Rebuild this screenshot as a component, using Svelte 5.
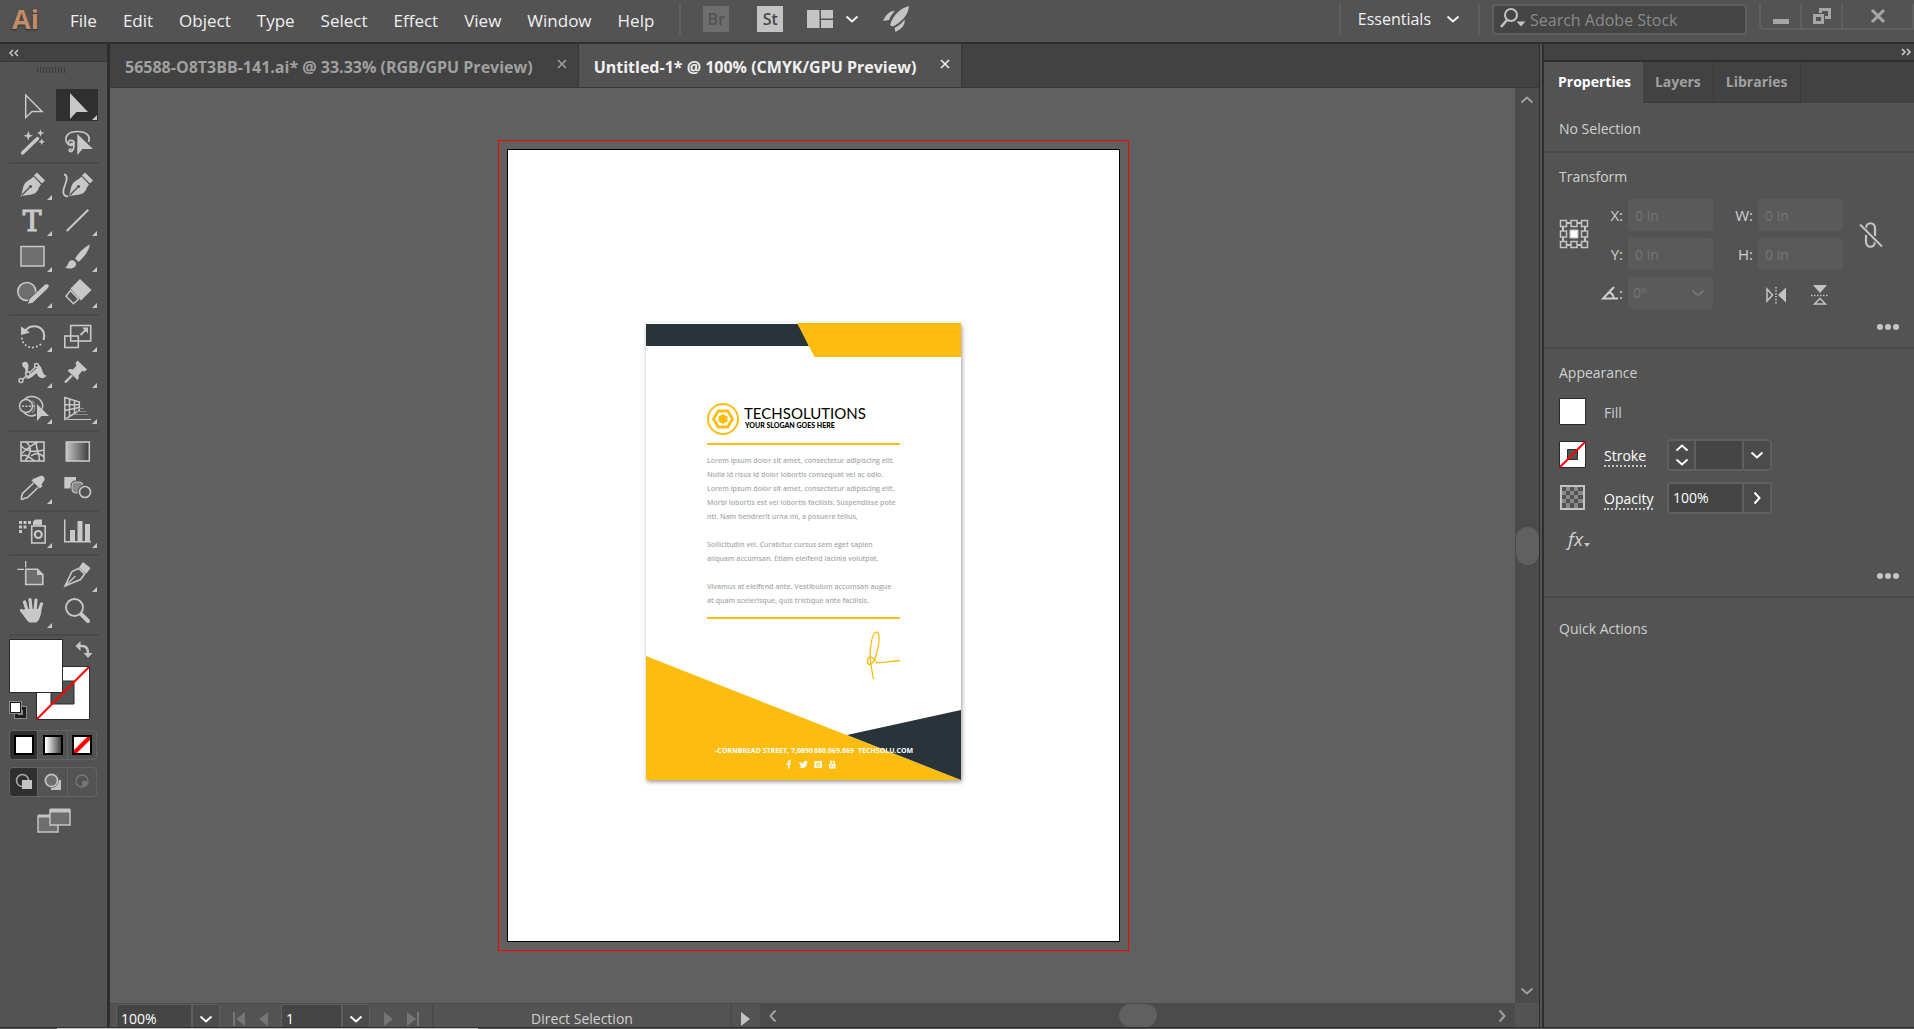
<script>
  const menus = ["File", "Edit", "Object", "Type", "Select", "Effect", "View", "Window", "Help"];

  const documents = [
    { title: "56588-O8T3BB-141.ai* @ 33.33% (RGB/GPU Preview)", active: false },
    { title: "Untitled-1* @ 100% (CMYK/GPU Preview)", active: true },
  ];

  const pen = `
    <path d="M10.500 29.500C13 24 12.500 19 15.500 15.500C18 13 21 12.500 23.500 9.500L31 17.500C28.500 20 28.500 23.500 25.500 26C21.500 28.500 16 27.500 10.500 29.500Z"/>
    <path d="M24 8.500L27 5.500L35 13.500L32 16.500Z"/>
    <path d="M11.500 28.500L19.500 20.500" stroke="#535353" stroke-width="1.500"/>
    <circle cx="20.500" cy="19.500" r="1.600" fill="#535353"/>`;

  // every icon is drawn on a 44 x 36 cell
  const toolGroups = [
    [
      { name: "Selection", art: `<path d="M15.700 8V30.500L22 24.500H32Z" fill="none" stroke="currentColor" stroke-width="1.500"/>` },
      { name: "Direct Selection", more: true, selected: true, art: `<path d="M15 6V32L21.500 25H33Z"/>` },
      {
        name: "Magic Wand",
        art: `<path d="M12.500 30L27.500 15.500" stroke="currentColor" stroke-width="3.400" stroke-linecap="round"/>
          <path d="M18.300 8l1.200 3.500 3.500 1.200-3.500 1.200-1.200 3.500-1.200-3.500-3.500-1.200 3.500-1.200zM30.500 6.500l1 2.600 2.600 1-2.600 1-1 2.600-1-2.600-2.600-1 2.600-1zM31.700 15.500l1 2.300 2.300 1-2.300 1-1 2.300-1-2.300-2.300-1 2.300-1z"/>`,
      },
      {
        name: "Lasso",
        art: `<g fill="none" stroke="currentColor" stroke-width="1.700">
            <path d="M12 20C8.500 13 14 8.500 22.500 8.500C31 8.500 36 12.500 33.500 19"/>
            <path d="M12 20C15 24 20 22 19 19C18 16.500 13 17 13.500 20C14 22 17.500 22 17 19.500M18.500 20C20 24 18 29 15 28.500C13 27.500 15 25.500 16.500 26.500"/>
          </g>
          <path d="M22.300 11V32L27.500 26H38Z"/>`,
      },
    ],
    [
      { name: "Pen", more: true, art: pen },
      {
        name: "Curvature",
        art: `<g transform="translate(3 0)">${pen}</g>
          <path d="M9 7.500C13 8 12 13 10 18C8 23 6.500 29 13 29.500" fill="none" stroke="currentColor" stroke-width="1.800"/>`,
      },
      {
        name: "Type",
        more: true,
        art: `<text x="22" y="28" text-anchor="middle" font-family="'DejaVu Serif', serif" font-size="28" stroke="currentColor" stroke-width="1.200">T</text>`,
      },
      { name: "Line Segment", more: true, art: `<path d="M11.700 28L33.300 6.700" stroke="currentColor" stroke-width="2"/>` },
      { name: "Rectangle", more: true, art: `<rect x="11" y="7.500" width="23" height="19.500" fill="#6e6e6e" stroke="currentColor" stroke-width="1.500"/>` },
      {
        name: "Paintbrush",
        more: true,
        art: `<path d="M35 5.500C31 7 24 13 20 19.500L23.500 23C29 18.500 34.500 10.500 35 5.500Z"/>
          <path d="M10 28.500C13 28 12 24 15.500 21.500C19 20.500 22 23.500 21 26C19 30.500 13.500 30 10 28.500Z"/>`,
      },
      {
        name: "Shaper",
        more: true,
        art: `<circle cx="16.800" cy="16.500" r="9" fill="#6e6e6e" stroke="currentColor" stroke-width="1.600"/>
          <path d="M17.500 29.500L19 24L34.500 9.500C37.500 7.500 40.500 10 38.500 13L23 28Z" stroke="#535353" stroke-width="1"/>`,
      },
      {
        name: "Eraser",
        more: true,
        art: `<path d="M25 4L36.500 15L26 25.500L15.500 13.500Z"/>
          <path d="M15.500 15.500L11 21.300L18.500 28.800L23.500 24Z" fill="none" stroke="currentColor" stroke-width="1.500"/>`,
      },
    ],
    [
      {
        name: "Rotate",
        more: true,
        art: `<path d="M15 12C20 5.500 30 5.500 33.500 13C34.500 16 34.500 18.500 33.500 21" fill="none" stroke="currentColor" stroke-width="2.200"/>
          <path d="M11 7.500V16L20 13.500Z"/>
          <path d="M12 19.500C12.500 25 18 29 23 28.500C27 28 30.500 26 32.500 23.500" fill="none" stroke="currentColor" stroke-width="2" stroke-linecap="round" stroke-dasharray="0.100 3.800"/>`,
      },
      {
        name: "Scale",
        more: true,
        art: `<g fill="none" stroke="currentColor" stroke-width="1.600"><rect x="15.700" y="6.500" width="20" height="15.500"/><rect x="9.800" y="17" width="13.500" height="11.500"/>
          <path d="M25.500 16L31 10.500" stroke-width="2"/></g><path d="M27 8.500H33V14.500Z"/>`,
      },
      {
        name: "Width",
        more: true,
        art: `<path d="M12 8.500C15 5 18.500 7 18.500 11C18.500 14 18 16.500 16 19L14.500 20C16 17 15.500 14 14.500 13C13 12 12 11 12 8.500Z"/>
          <path d="M14 22.500C19 26 23 21 26.500 18C28 23 33 25.500 36.500 20.500C31 20 33 9.500 27.500 9.500L27 13C26 14.500 23 15 21 17C19 19 17 22 14 22.500Z"/>
          <path d="M11.500 25.500L26.500 11" stroke="#535353" stroke-width="3"/>
          <path d="M11.500 25.500L26.500 11" stroke="currentColor" stroke-width="1.500"/>
          <g fill="#535353" stroke="currentColor" stroke-width="1.400"><circle cx="11" cy="25.500" r="2"/><circle cx="18" cy="19" r="2.200"/><circle cx="26.500" cy="10.500" r="2"/></g>`,
      },
      {
        name: "Puppet Warp",
        more: true,
        art: `<path d="M22.500 5.500L32 14.500L29.500 16.500L27 16L23.500 20.500C24 22.500 23.500 24 22.500 25L12.500 15.500C14 14 16 13.500 18 14.500L21.500 10.500L20.500 8Z"/>
          <path d="M10 27.500L17 20.500" stroke="currentColor" stroke-width="2.400"/>`,
      },
      {
        name: "Shape Builder",
        more: true,
        art: `<g fill="none" stroke="currentColor" stroke-width="1.500"><path d="M14.500 8.500C18 4 27 4.500 31 10C33 13 33 16 32 18M14 21.500C17 25 22 26 26 23.500"/><circle cx="16" cy="15" r="6.500"/>
          <path d="M22 9.500C26 13 25.500 19 22 21.500" stroke="#8a8a8a"/><path d="M12 15.300H26" stroke-dasharray="2 1.500"/></g>
          <path d="M27 13V30L31.500 25H39Z"/>`,
      },
      {
        name: "Perspective Grid",
        more: true,
        art: `<g fill="none" stroke="currentColor" stroke-width="1.500"><path d="M9.800 6.500L24.300 11V19.500L9.800 28.500ZM9.800 13.500L24.300 13.800M9.800 19.500L24.300 16.500M14.500 8V25.500M19.500 9.500V22.500"/></g>
          <g stroke="#8a8a8a" stroke-width="1"><path d="M24 17.500H29M22 20.500H31M19 23.500H33"/><path d="M12 28.500H36" stroke="currentColor"/></g>`,
      },
    ],
    [
      {
        name: "Mesh",
        art: `<g fill="none" stroke="currentColor" stroke-width="1.600"><rect x="11" y="7" width="23" height="19"/>
          <path d="M16 7C22 12 22 17 15 26M27 7C24 13 31 18 29 26M11 11C16 16 23 18 34 15M11 21C17 18 20 24 25 26M11 19C17 13 20 12 27 7M21 21C26 17 30 18 34 22"/></g>`,
      },
      { name: "Gradient", art: `<rect x="11.300" y="7" width="23" height="19" fill="url(#tool-gradient)" stroke="currentColor" stroke-width="1.600"/>` },
      {
        name: "Eyedropper",
        more: true,
        art: `<path d="M24.500 7.500L30 5C33 3.500 36 7 34 10L31.500 13.500L32.500 15L30 17.500L21.500 9.500L24 7.200Z"/>
          <path d="M23.500 12L12.500 22.500L11.500 26.500C10.500 28.500 12.500 29 14 27.500L17.500 26.500L28 16.500" fill="none" stroke="currentColor" stroke-width="1.600"/>`,
      },
      {
        name: "Blend",
        art: `<path d="M9.300 6H21V17.500H9.300Z"/><rect x="17" y="11" width="11" height="11" rx="3.500" fill="#8a8a8a" stroke="#535353" stroke-width="3"/>
          <rect x="17" y="11" width="11" height="11" rx="3.500" fill="#8a8a8a" stroke="currentColor" stroke-width="1"/>
          <circle cx="30" cy="21" r="6" fill="#535353" stroke="#535353" stroke-width="3"/><circle cx="30" cy="21" r="5.500" fill="#535353" stroke="currentColor" stroke-width="1.600"/>`,
      },
    ],
    [
      {
        name: "Symbol Sprayer",
        more: true,
        art: `<path d="M9 6h3v3H9zM13.500 6h3v3h-3zM18 6h3v3h-3zM9 10.500h3v3H9zM13.500 10.500h3v3h-3zM9 15h3v3H9zM23 6.500L25.500 4.500H32V10H23Z"/>
          <rect x="21.700" y="11" width="13.500" height="17" fill="none" stroke="currentColor" stroke-width="1.600"/>
          <circle cx="28.300" cy="19.500" r="3.500" fill="none" stroke="currentColor" stroke-width="2.200"/>`,
      },
      { name: "Column Graph", more: true, art: `<path d="M9 4.500h1.500V26H36v1.500H9zM15 15h5v11h-5zM22.500 6h5v20h-5zM30 9h5v17h-5z"/>` },
    ],
    [
      {
        name: "Artboard",
        art: `<path d="M15.700 2V8.500M7.300 10.300H14" stroke="currentColor" stroke-width="1.300"/>
          <path d="M15.700 10.300H27.500L32.800 15.500V25.500H15.700Z" fill="#6e6e6e" stroke="currentColor" stroke-width="1.600"/><path d="M27 10V16H33Z"/>`,
      },
      {
        name: "Slice",
        more: true,
        art: `<path d="M28 3L35.500 9L31 15L24 8.500Z"/><path d="M23.500 9.500L17 12.500L10 27L25.500 20.500L29.500 15Z" fill="none" stroke="currentColor" stroke-width="1.600"/>
          <path d="M10 27L20.500 17" stroke="currentColor" stroke-width="1.200"/>`,
      },
      {
        name: "Hand",
        more: true,
        art: `<g fill="none" stroke="currentColor" stroke-linecap="round" stroke-width="3.200"><path d="M17 15L14.500 7M21 14L20 4.500M25.200 14L26 5M28.500 17L31.500 9M17 22L11.500 15.500"/></g>
          <path d="M15.500 14H30L31.500 12C32 19 29 26.500 26 27.500H19.500C17 26 12 18.500 11 15.500Z"/>`,
      },
      {
        name: "Zoom",
        art: `<circle cx="19.500" cy="12.500" r="8.500" fill="none" stroke="currentColor" stroke-width="1.800"/>
          <path d="M26.500 19.500L33 26" stroke="currentColor" stroke-width="4" stroke-linecap="round"/>`,
      },
    ],
  ];

  const transformFields = [
    { id: "pos-x", label: "X:" },
    { id: "width", label: "W:" },
    { id: "pos-y", label: "Y:" },
    { id: "height", label: "H:" },
  ];

  const panelTabs = ["Properties", "Layers", "Libraries"];

  const letter = [
    { y: 140, text: "Lorem ipsum dolor sit amet, consectetur adipiscing elit." },
    { y: 154, text: "Nulla id risus id dolor lobortis consequat vel ac odio." },
    { y: 168, text: "Lorem ipsum dolor sit amet, consectetur adipiscing elit." },
    { y: 182, text: "Morbi lobortis est vel lobortis facilisis. Suspendisse pote" },
    { y: 196, text: "nti. Nam hendrerit urna mi, a posuere tellus," },
    { y: 224, text: "Sollicitudin vel. Curabitur cursus sem eget sapien" },
    { y: 238, text: "aliquam accumsan. Etiam eleifend lacinia volutpat." },
    { y: 266, text: "Vivamus at eleifend ante. Vestibulum accumsan augue" },
    { y: 280, text: "at quam scelerisque, quis tristique ante facilisis." },
  ];
</script>

{#snippet chevron(d)}
  <svg class="chevron" width="14" height="14" viewBox="0 0 14 14" fill="none" stroke="currentColor" stroke-width="2">
    {#if d === "down"}
      <path d="M1.500 4.500L7 9.500L12.500 4.500" />
    {:else if d === "up"}
      <path d="M1.500 9.500L7 4.500L12.500 9.500" />
    {:else if d === "left"}
      <path d="M9.500 1.500L4.500 7L9.500 12.500" />
    {:else}
      <path d="M4.500 1.500L9.500 7L4.500 12.500" />
    {/if}
  </svg>
{/snippet}

<div class="app">
  <header>
    <span class="logo">Ai</span>
    <nav>
      {#each menus as menu}
        <button>{menu}</button>
      {/each}
    </nav>
    <span class="rule"></span>
    <div class="shortcuts">
      <button class="badge dim">Br</button>
      <button class="badge">St</button>
      <button class="arrange" aria-label="Arrange Documents">
        <svg width="26" height="18" viewBox="0 0 26 18" fill="#c4c4c4">
          <path d="M0 0h12.500v18H0zM14 0h12v8.500H14zM14 10h12v8H14z" />
        </svg>
        {@render chevron("down")}
      </button>
      <button aria-label="GPU Performance">
        <svg width="26" height="26" viewBox="0 0 26 26" fill="#c4c4c4">
          <path d="M26 0C18 2 10.500 8 7 19L9.500 20.500C18 17 25.500 9 26 0ZM12 5C6 4.500 3 9 0 15L6 14C7 11 9 8 12 5ZM21.500 13.500C19.500 17 15.500 20 11.500 22L12.500 26C18 23 22.500 19.500 21.500 13.500Z" />
        </svg>
      </button>
    </div>
    <div class="right">
      <span class="rule"></span>
      <button class="workspace">Essentials {@render chevron("down")}</button>
      <span class="rule"></span>
      <label class="search">
        <svg width="26" height="24" viewBox="0 0 26 24" fill="none" stroke="#c4c4c4" stroke-width="2">
          <circle cx="11" cy="8" r="6" /><path d="M7 13L1 20" stroke-width="2.500" />
          <path d="M16.500 14.500h9l-4.500 5z" fill="#c4c4c4" stroke="none" />
        </svg>
        <input type="text" placeholder="Search Adobe Stock" aria-label="Search Adobe Stock" />
      </label>
      <div class="window">
        <button aria-label="Minimize"><svg width="16" height="20" viewBox="0 0 16 20" fill="#a6a6a6"><path d="M0 13h16v5H0z" /></svg></button>
        <button aria-label="Restore">
          <svg width="18" height="20" viewBox="0 0 18 20" fill="none" stroke="#a6a6a6" stroke-width="3">
            <path d="M1.500 9.500h8v7h-8zM7.500 7V3.500h9v8H12" />
          </svg>
        </button>
        <button aria-label="Close"><svg width="16" height="20" viewBox="0 0 16 20" fill="none" stroke="#a6a6a6" stroke-width="3"><path d="M2 4L14 16M14 4L2 16" /></svg></button>
      </div>
    </div>
  </header>

  <main>
    <aside class="toolbar">
      <div class="collapse"><button aria-label="Collapse tools">
        <svg width="12" height="8" viewBox="0 0 12 8" fill="none" stroke="currentColor" stroke-width="1.500"><path d="M5 1L2 4L5 7M10 1L7 4L10 7" /></svg>
      </button></div>
      <div class="grip"></div>
      {#each toolGroups as group}
        <div class="tools">
          {#each group as tool}
            <button class:selected={tool.selected} aria-label={tool.name}>
              <svg width="44" height="36" viewBox="0 0 44 36" fill="currentColor">
                {@html tool.art}
                {#if tool.more}<path d="M42 28v5h-5z" />{/if}
              </svg>
            </button>
          {/each}
        </div>
      {/each}

      <svg class="paint" width="84" height="82" viewBox="0 0 84 82" role="img" aria-label="Fill and stroke">
        <path d="M27.500 27.500h53v53h-53zM42 42v23h23V42z" fill="#fff" fill-rule="evenodd" stroke="#2b2b2b" />
        <path d="M28 80L80 28" stroke="#f00" stroke-width="2" />
        <rect x="0.500" y="0.500" width="53" height="53" fill="#fff" stroke="#2b2b2b" />
        <path d="M70 7h3q6 0 6 7" fill="none" stroke="#c4c4c4" stroke-width="2.500" />
        <path d="M66.500 7l5-5v10zM74.500 14h9l-4.500 5z" fill="#c4c4c4" />
        <rect x="7.500" y="69.500" width="8" height="8" fill="none" stroke="#8a8a8a" stroke-width="5" />
        <rect x="7.500" y="69.500" width="8" height="8" fill="none" stroke="#1d1d1d" stroke-width="3" />
        <rect x="0.500" y="62.500" width="12" height="12" fill="#fff" stroke="#8a8a8a" /><rect x="1.500" y="63.500" width="10" height="10" fill="#fff" stroke="#1d1d1d" />
      </svg>

      <div class="modes">
        <button class="on" aria-label="Color"><svg width="20" height="20" viewBox="0 0 20 20"><rect x="1" y="1" width="18" height="18" fill="#fff" stroke="#000" stroke-width="2" /></svg></button>
        <button aria-label="Gradient fill"><svg width="20" height="20" viewBox="0 0 20 20"><rect x="1" y="1" width="18" height="18" fill="url(#swatch-gradient)" stroke="#000" stroke-width="2" /></svg></button>
        <button aria-label="None">
          <svg width="20" height="20" viewBox="0 0 20 20"><path d="M0 0h20v20H0z" fill="#fff" /><path d="M2 18L18 2" stroke="#f00" stroke-width="4" /><path d="M1 1h18v18H1z" fill="none" stroke="#000" stroke-width="2" /></svg>
        </button>
      </div>
      <div class="modes">
        <button class="on" aria-label="Draw Normal"><svg width="18" height="18" viewBox="0 0 18 18"><circle cx="7.500" cy="7.500" r="6" fill="none" stroke="#aaa" stroke-width="1.600" /><path d="M7 7h10v9H7z" fill="#c4c4c4" /></svg></button>
        <button aria-label="Draw Behind"><svg width="18" height="18" viewBox="0 0 18 18"><path d="M7 7h10v10H7z" fill="#c4c4c4" /><circle cx="7.500" cy="7.500" r="6" fill="#6e6e6e" stroke="#6e6e6e" stroke-width="3" /><circle cx="7.500" cy="7.500" r="6" fill="#6e6e6e" stroke="#c4c4c4" stroke-width="1.600" /></svg></button>
        <button aria-label="Draw Inside"><svg width="18" height="18" viewBox="0 0 18 18"><circle cx="9" cy="8" r="6" fill="none" stroke="#757575" stroke-width="1.500" /><path d="M9 8h6a6 6 0 0 1-6 6z" fill="#757575" /></svg></button>
      </div>
      <button class="screen-mode" aria-label="Change Screen Mode">
        <svg width="34" height="26" viewBox="0 0 34 26" fill="#6e6e6e" stroke="#c4c4c4" stroke-width="1.500">
          <path d="M1 8h20v16H1z" /><path d="M1 8h20" stroke-width="3" /><path d="M13 2h20v15H13z" /><path d="M13 2.500h20" stroke-width="4" />
        </svg>
      </button>
    </aside>

    <section class="document">
      <div class="tabs">
        {#each documents as doc}
          <div class="tab" class:active={doc.active}>
            <button class="title">{doc.title}</button>
            <button class="close" aria-label="Close document">
              <svg width="10" height="10" viewBox="0 0 10 10" fill="none" stroke="currentColor" stroke-width="1.600"><path d="M1 1L9 9M9 1L1 9" /></svg>
            </button>
          </div>
        {/each}
      </div>

      <div class="canvas">
        <div class="bleed">
          <svg class="artboard" width="611" height="791" viewBox="0 0 611 791">
            <g transform="translate(138 173)">
              <rect class="sheet" width="315" height="457" fill="#fff" />
              <path d="M0 1H153L163 23H0Z" fill="#28343a" />
              <path d="M151 0H315V34H168.500Z" fill="#fdbd10" />
              <g fill="none" stroke="#fdbd10">
                <circle cx="77" cy="96" r="15" stroke-width="2" />
                <path d="M67.500 96L72.200 88H81.800L86.500 96L81.800 104H72.200Z" stroke-width="2.800" />
                <path d="M77 91L81.500 93.500V98.500L77 101L72.500 98.500V93.500Z" fill="#fdbd10" stroke="none" />
                <path d="M61 121H254M61 295H254" stroke-width="2" />
                <path
                  d="M227.500 356C226 348 224.500 341 224 333C224.500 322 226 309 231 309C235 310 232.500 324 230.500 331C229 337 226 342 223.500 341.500C220.500 341 221 335 224 334C227.500 333.500 228.500 337.500 230.500 339.500C237 340 245 338 254 337.500"
                  stroke-width="1.300"
                />
              </g>
              <text class="brand" x="98" y="96">TECHSOLUTIONS</text>
              <text class="slogan" x="99" y="105">YOUR SLOGAN GOES HERE</text>
              {#each letter as line}
                <text class="body" x="61" y={line.y}>{line.text}</text>
              {/each}
              <path d="M0 333L315 457H0Z" fill="#fdbd10" />
              <path d="M201 412L315 387V457Z" fill="#28343a" />
              <g class="contact">
                <text x="69" y="430">-CORNBREAD STREET, 7,0890</text>
                <text x="168" y="430">880.069.869</text>
                <text x="212" y="430">TECHSOLU.COM</text>
              </g>
              <g fill="#fff">
                <path d="M142 445.500V442H140.500V440.500H142C141.500 437.500 143 437 145 437.500V439C143.500 438.800 143.500 439.500 143.500 440.500H145L144.700 442H143.500V445.500Z" />
                <path d="M153.500 438.500C155 440 156.500 440.500 157.500 440C157.500 437.500 160 437 161 438.500L162 438.300L161 440C161 444 157 446 153.500 444.500L155.500 443.500C154 443 153.500 441 153.500 438.500Z" />
                <path d="M168.500 438h7.500v7h-7.500z" />
                <circle cx="172.300" cy="441.800" r="1.700" fill="none" stroke="#fdbd10" />
                <path d="M183 441h6.500v4.500H183zM183.500 437.500h1l.500 1.500.500-1.500h1l-1 3h-1zM187 438h2v2.500h-2z" />
                <path d="M184 442.500h2M185 442.500v2M187.500 442v2.500" stroke="#fdbd10" stroke-width=".7" />
              </g>
            </g>
          </svg>
        </div>
      </div>

      <div class="scroll vertical">
        {@render chevron("up")}
        <span class="thumb"></span>
        {@render chevron("down")}
      </div>

      <div class="status">
        <div class="combo zoom">
          <input type="text" value="100%" aria-label="Zoom level" />
          <button aria-label="Zoom presets">{@render chevron("down")}</button>
        </div>
        <button class="step" aria-label="First artboard" disabled><svg width="14" height="14" viewBox="0 0 14 14" fill="currentColor"><path d="M1 0h2v14H1zM13 0v14L4 7z" /></svg></button>
        <button class="step" aria-label="Previous artboard" disabled><svg width="14" height="14" viewBox="0 0 14 14" fill="currentColor"><path d="M11 0v14L2 7z" /></svg></button>
        <div class="combo board">
          <input type="text" value="1" aria-label="Artboard" />
          <button aria-label="Artboard list">{@render chevron("down")}</button>
        </div>
        <button class="step" aria-label="Next artboard" disabled><svg width="14" height="14" viewBox="0 0 14 14" fill="currentColor"><path d="M3 0v14L12 7z" /></svg></button>
        <button class="step" aria-label="Last artboard" disabled><svg width="14" height="14" viewBox="0 0 14 14" fill="currentColor"><path d="M1 0v14L10 7zM11 0h2v14h-2z" /></svg></button>
        <span class="mode">Direct Selection</span>
        <button class="play" aria-label="Status menu"><svg width="10" height="14" viewBox="0 0 10 14" fill="#c4c4c4"><path d="M0 0v14L9 7z" /></svg></button>
        <div class="scroll horizontal">
          {@render chevron("left")}
          <span class="thumb"></span>
          {@render chevron("right")}
        </div>
      </div>
      <div class="corner"></div>
    </section>

    <aside class="panel">
      <div class="collapse right"><button aria-label="Collapse panels">
        <svg width="12" height="8" viewBox="0 0 12 8" fill="none" stroke="currentColor" stroke-width="1.500"><path d="M2 1L5 4L2 7M7 1L10 4L7 7" /></svg>
      </button></div>
      <div class="panel-tabs">
        {#each panelTabs as tab, i}
          <button class:active={i === 0}>{tab}</button>
        {/each}
      </div>

      <div class="selection">No Selection</div>

      <section class="transform">
        <h2>Transform</h2>
        <div class="transform-body">
          <svg class="anchor" width="30" height="30" viewBox="0 0 30 30" fill="none" stroke="#c4c4c4" stroke-width="2">
            <path d="M4 4h22v22H4z" />
            <path d="M1.500 1.500h6v6h-6zM12 1.500h6v6h-6zM22.500 1.500h6v6h-6zM1.500 12h6v6h-6zM22.500 12h6v6h-6zM1.500 22.500h6v6h-6zM12 22.500h6v6h-6zM22.500 22.500h6v6h-6z" fill="#535353" stroke-width="1.500" />
            <path d="M11 11h8v8h-8z" fill="#fff" stroke-width="1" />
          </svg>
          <div class="fields">
            {#each transformFields as field}
              <label for={field.id}>{field.label}</label>
              <input id={field.id} type="text" value="0 in" disabled />
            {/each}
            <label for="angle" aria-label="Rotate">
              <svg width="18" height="14" viewBox="0 0 18 14" fill="none" stroke="currentColor" stroke-width="2"><path d="M13 1L2 12.500H17M8.500 6.500C11 7.500 12.500 9.500 12.500 12" /></svg>:
            </label>
            <div class="angle">
              <select id="angle" disabled><option>0º</option></select>
              {@render chevron("down")}
            </div>
            <div class="flips">
              <button aria-label="Flip Horizontal"><svg width="20" height="18" viewBox="0 0 20 18"><path d="M1 3v12L6.500 9z" fill="none" stroke="#c4c4c4" stroke-width="1.500" /><path d="M20 1.500v15L12 9z" fill="#c4c4c4" /><path d="M10 1v17" stroke="#c4c4c4" stroke-width="1.500" stroke-dasharray="1.500 1.500" /></svg></button>
              <button aria-label="Flip Vertical"><svg width="18" height="20" viewBox="0 0 18 20"><path d="M2 0h14L9 8z" fill="#c4c4c4" /><path d="M3.500 19L9 13.500L14.500 19z" fill="none" stroke="#c4c4c4" stroke-width="1.500" /><path d="M0 10.500h18" stroke="#c4c4c4" stroke-width="1.500" stroke-dasharray="1.500 1.500" /></svg></button>
            </div>
          </div>
          <button class="link" aria-label="Constrain proportions">
            <svg width="24" height="26" viewBox="0 0 24 26" fill="none" stroke="#c4c4c4" stroke-width="2.200">
              <path d="M7 9V6.500C7 -.500 16 -.500 16 6.500V14M7 13V19.500C7 26.500 16 26.500 16 19.500V18" />
              <path d="M1.500 3L23 24.500" stroke="#535353" stroke-width="4" /><path d="M1 2.500L23 24.500" stroke-width="2" />
            </svg>
          </button>
        </div>
        <button class="dots" aria-label="More transform options"><svg width="22" height="6" viewBox="0 0 22 6" fill="#c4c4c4"><circle cx="3" cy="3" r="3" /><circle cx="11" cy="3" r="3" /><circle cx="19" cy="3" r="3" /></svg></button>
      </section>

      <section class="appearance">
        <h2>Appearance</h2>
        <div class="row">
          <svg width="27" height="27" viewBox="0 0 27 27"><path d="M.500.500h26v26h-26z" fill="#fff" stroke="#2b2b2b" /></svg>
          <span class="name">Fill</span>
        </div>
        <div class="row">
          <svg width="27" height="27" viewBox="0 0 27 27"><path d="M.500.500h26v26h-26z" fill="#fff" stroke="#2b2b2b" /><path d="M8.500 8.500h10v10h-10z" fill="#535353" stroke="#2b2b2b" /><path d="M1 26L26 1" stroke="#f00" stroke-width="2" /></svg>
          <label class="name" for="stroke"><span>Stroke</span></label>
          <div class="combo field">
            <button class="spin" aria-label="Step stroke weight">{@render chevron("up")}{@render chevron("down")}</button>
            <input id="stroke" type="text" />
            <button aria-label="Stroke presets">{@render chevron("down")}</button>
          </div>
        </div>
        <div class="row">
          <svg width="27" height="27" viewBox="0 0 27 27">
            <path d="M2 2h23v23H2z" fill="#535353" stroke="#c4c4c4" stroke-width="2" />
            <path d="M7 3h4v4H7zM15 3h4v4h-4zM3 7h4v4H3zM11 7h4v4h-4zM19 7h5v4h-5zM7 11h4v4H7zM15 11h4v4h-4zM3 15h4v4H3zM11 15h4v4h-4zM19 15h5v4h-5zM7 19h4v5H7zM15 19h4v5h-4z" fill="#8a8a8a" />
          </svg>
          <label class="name" for="opacity"><span>Opacity</span></label>
          <div class="combo field">
            <input id="opacity" type="text" value="100%" />
            <button aria-label="Opacity slider">{@render chevron("right")}</button>
          </div>
        </div>
        <button class="fx" aria-label="Effects"><i>fx</i><svg width="6" height="4" viewBox="0 0 6 4" fill="#c4c4c4"><path d="M0 0h6L3 4z" /></svg></button>
        <button class="dots" aria-label="More appearance options"><svg width="22" height="6" viewBox="0 0 22 6" fill="#c4c4c4"><circle cx="3" cy="3" r="3" /><circle cx="11" cy="3" r="3" /><circle cx="19" cy="3" r="3" /></svg></button>
      </section>

      <section class="quick">
        <h2>Quick Actions</h2>
      </section>
    </aside>
  </main>

  <div class="taskbar"></div>

  <svg class="defs" width="0" height="0" aria-hidden="true">
    <linearGradient id="tool-gradient"><stop offset="0" stop-color="#c4c4c4" /><stop offset="1" stop-color="#3c3c3c" /></linearGradient>
    <linearGradient id="swatch-gradient"><stop offset="0.100" stop-color="#fff" /><stop offset="1" stop-color="#333" /></linearGradient>
  </svg>
</div>

<style>
  :global(body) {
    background: #535353;
  }

  .app {
    display: flex;
    flex-direction: column;
    position: relative;
    height: 100vh;
    overflow: hidden;
    background: #535353;
    color: #d0d0d0;
    font-family: "Open Sans", "Noto Sans", sans-serif;
    font-size: 14px;
    line-height: 20px;
  }

  .app * {
    box-sizing: border-box;
  }

  svg {
    display: block;
    flex: none;
  }

  .defs {
    position: absolute;
  }

  button {
    display: flex;
    align-items: center;
    justify-content: center;
    padding: 0;
    border: none;
    background: none;
    color: inherit;
    font: inherit;
    white-space: nowrap;
  }

  input,
  select {
    min-width: 0;
    border: none;
    background: none;
    color: inherit;
    font: inherit;
  }

  h2 {
    margin: 0;
    font-size: 14px;
    font-weight: 400;
  }

  /* application bar */
  header {
    display: flex;
    align-items: center;
    flex: none;
    height: 44px;
    padding: 0 0 4px 12px;
    border-bottom: 2px solid #2e2e2e;
    font-size: 17px;
    color: #f0f0f0;
  }

  .logo {
    width: 58px;
    color: #c08d68;
    font-size: 27px;
    font-weight: 700;
    line-height: 38px;
    text-shadow: 0 1px 2px #2b2b2b;
  }

  nav {
    display: flex;
    gap: 26px;
    padding-top: 3px;
  }

  .rule {
    width: 2px;
    height: 31px;
    background: #5f5f5f;
  }

  nav + .rule {
    margin-left: 25px;
  }

  .shortcuts {
    display: flex;
    align-items: center;
    gap: 24px;
    margin-left: 22px;
  }

  .badge {
    width: 26px;
    height: 26px;
    margin-right: 4px;
    background: #c4c4c4;
    color: #484848;
    font-size: 16px;
    font-weight: 600;
  }

  .badge.dim {
    background: #6e6e6e;
    color: #535353;
  }

  .arrange {
    gap: 12px;
    margin-left: -4px;
  }

  .right {
    display: flex;
    align-items: center;
    margin-left: auto;
  }

  .workspace {
    gap: 15px;
    padding: 0 18px 0 17px;
    font-size: 16px;
  }

  .search {
    display: flex;
    align-items: center;
    width: 255px;
    height: 31px;
    margin: 0 12px;
    padding-left: 6px;
    border: 2px solid #5f5f5f;
    border-radius: 4px;
    background: #454545;
  }

  .search input {
    flex: 1;
    padding: 2px 4px 0;
    font-size: 16px;
  }

  .search input::placeholder {
    color: #8a8a8a;
    opacity: 1;
  }

  .window {
    display: flex;
    align-self: flex-start;
    height: 26px;
    border: 2px solid #5f5f5f;
    border-width: 0 0 2px 2px;
    border-bottom-left-radius: 5px;
  }

  .window button {
    width: 41px;
    border-right: 2px solid #5f5f5f;
  }

  .window button:last-child {
    width: 71px;
  }

  main {
    display: grid;
    grid-template-columns: 107px minmax(0, 1fr) 374px;
    flex: 1;
    min-height: 0;
  }

  .collapse {
    display: flex;
    align-items: center;
    height: 18px;
    padding: 0 8px;
    border-bottom: 1px solid #393939;
    background: #424242;
  }

  .collapse.right {
    justify-content: flex-end;
    padding: 0 2px;
    border-bottom: 2px solid #2e2e2e;
  }

  /* toolbar */
  .toolbar {
    display: flex;
    flex-direction: column;
    color: #c8c8c8;
  }

  .grip {
    width: 30px;
    height: 6px;
    margin: 5px 0 14px 37px;
    background: repeating-linear-gradient(90deg, #3a3a3a 0 1px, transparent 1px 3px);
  }

  .tools {
    display: grid;
    grid-template-columns: 45px 45px;
    flex: none;
    margin-left: 9px;
    width: 90px;
    padding-bottom: 3px;
    border-bottom: 2px solid #4a4a4a;
    margin-bottom: 3px;
  }

  .tools button {
    height: 36px;
    border-radius: 4px;
  }

  .tools button.selected {
    background: linear-gradient(#2f2f2f, #2f2f2f) center / 42px 32px no-repeat;
  }

  .paint {
    margin: 0 0 9px 9px;
  }

  .modes {
    display: grid;
    grid-template-columns: 27px 30px 29px;
    flex: none;
    width: 88px;
    height: 30px;
    margin: 0 0 7px 9px;
    border: 1px solid #636363;
    border-radius: 4px;
    overflow: hidden;
  }

  .modes button + button {
    border-left: 1px solid #636363;
  }

  .modes .on {
    background: #2f2f2f;
  }

  .screen-mode {
    margin: 4px 0 0 37px;
    width: 34px;
  }

  /* document window */
  .document {
    display: grid;
    grid-template-columns: minmax(0, 1fr) 24px;
    grid-template-rows: 44px minmax(0, 1fr) 24px;
    border: solid #2e2e2e;
    border-width: 0 1px 0 3px;
  }

  .tabs {
    display: flex;
    grid-column: 1 / -1;
    border-bottom: 1px solid #383838;
    background: #424242;
    color: #a0a0a0;
    font-size: 16px;
    font-weight: 700;
  }

  .tab {
    display: flex;
    align-items: center;
    gap: 24px;
    padding: 0 11px 0 15px;
    border-right: 1px solid #383838;
  }

  .tab.active {
    background: #535353;
    color: #f0f0f0;
  }

  .title {
    padding-top: 3px;
  }

  .close {
    padding-bottom: 4px;
  }

  .canvas {
    display: flex;
    align-items: center;
    justify-content: center;
    padding-left: 2px;
    overflow: hidden;
    background: #606060;
  }

  .bleed {
    flex: none;
    padding: 8px;
    border: 1px solid #f00;
  }

  .artboard {
    box-sizing: content-box !important;
    border: 1px solid #000;
    background: #fff;
  }

  .sheet {
    filter: drop-shadow(1px 2px 2px rgba(0, 0, 0, 0.4));
  }

  .brand,
  .slogan {
    font-family: Lato, "Open Sans", sans-serif;
    font-size: 15px;
  }

  .slogan {
    font-size: 7px;
    font-weight: 900;
  }

  .body {
    fill: #a9abad;
    font-size: 7px;
    font-weight: 600;
  }

  .contact {
    fill: #fff;
    font-size: 7px;
    font-weight: 700;
  }

  .scroll {
    display: flex;
    align-items: center;
    justify-content: space-between;
    background: #4b4b4b;
    color: #a0a0a0;
  }

  .vertical {
    flex-direction: column;
    padding: 5px 0;
  }

  .thumb {
    width: 23px;
    height: 38px;
    border-radius: 12px;
    background: #606060;
  }

  .horizontal {
    flex: 1;
    padding: 0 6px;
  }

  .horizontal .thumb {
    width: 38px;
    height: 23px;
  }

  .status {
    display: flex;
    background: #535353;
    border-top: 1px solid #4b4b4b;
  }

  .corner {
    background: #535353;
  }

  .combo {
    display: flex;
    border: 2px solid #5f5f5f;
    border-radius: 4px;
    background: #454545;
    color: #fff;
  }

  .combo input {
    flex: 1;
  }

  .combo button {
    width: 28px;
    border-left: 2px solid #5f5f5f;
    background: #4b4b4b;
  }

  .status .combo {
    height: 24px;
    border-width: 1px 1px 0;
    border-radius: 4px 4px 0 0;
  }

  .status input {
    padding: 4px 4px 0;
  }

  .status .combo button {
    padding-top: 4px;
  }

  .status .zoom {
    width: 104px;
    margin: 0 6px;
  }

  .status .board {
    width: 89px;
    margin: 0 5px;
  }

  .step {
    width: 25px;
    padding-top: 6px;
    color: #757575;
  }

  .mode {
    width: 300px;
    margin-left: 7px;
    padding-top: 5px;
    border: solid #4b4b4b;
    border-width: 0 2px;
    text-align: center;
  }

  .play {
    width: 28px;
    padding-top: 6px;
  }

  /* properties panel */
  .panel {
    margin-left: 2px;
    border-left: 2px solid #2e2e2e;
  }

  .panel-tabs {
    display: flex;
    height: 41px;
    background: #424242;
    color: #a0a0a0;
    font-weight: 700;
  }

  .panel-tabs button {
    padding: 0 12px;
    border: solid #393939;
    border-width: 0 1px 1px 0;
  }

  .panel-tabs .active {
    padding: 0 12px 1px 14px;
    border: none;
    background: #535353;
    color: #fff;
  }

  .selection {
    padding: 16px 15px 12px;
    border-bottom: 2px solid #4a4a4a;
  }

  .transform,
  .appearance,
  .quick {
    padding: 14px 15px 7px;
    border-bottom: 2px solid #4a4a4a;
  }

  .transform-body {
    display: flex;
    margin-top: 12px;
  }

  .anchor {
    margin-top: 20px;
  }

  .fields {
    display: grid;
    grid-template-columns: 34px 85px 35px 85px;
    grid-auto-rows: 32px;
    gap: 7px 5px;
    align-items: center;
    text-align: right;
  }

  .fields label {
    display: flex;
    justify-content: flex-end;
    align-items: center;
    font-size: 15px;
  }

  .fields input,
  .angle {
    width: 85px;
    height: 32px;
    padding: 0 7px;
    border-radius: 3px;
    background: #5a5a5a;
    color: #757575;
  }

  .angle {
    display: flex;
    align-items: center;
    padding: 0 8px 0 5px;
  }

  .angle select {
    flex: 1;
    padding: 0;
    appearance: none;
    opacity: 1;
  }

  .flips {
    display: flex;
    grid-column: 3 / 5;
    gap: 25px;
    padding: 3px 0 0 48px;
  }

  .link {
    align-self: flex-start;
    margin: 23px 0 0 16px;
  }

  .dots {
    margin: 15px 0 10px auto;
  }

  .appearance .dots {
    margin-top: 21px;
  }

  .row {
    display: flex;
    align-items: center;
    height: 43px;
  }

  .appearance h2 {
    margin-bottom: 7px;
  }

  .name {
    width: 63px;
    margin-left: 18px;
    padding-top: 2px;
    line-height: 18px;
  }

  .name span {
    border-bottom: 2px dotted #c4c4c4;
    color: #fff;
  }

  .field {
    width: 105px;
    height: 32px;
  }

  .field .spin {
    flex-direction: column;
    width: 27px;
    border: none;
    border-right: 2px solid #5f5f5f;
  }

  .field input {
    padding: 0 4px;
  }

  .fx {
    align-items: flex-end;
    margin: 7px 0 0 9px;
    font-size: 19px;
    line-height: 26px;
  }

  .fx svg {
    margin: 0 0 5px 1px;
  }

  .quick {
    padding-top: 21px;
    border: none;
  }

  .taskbar {
    flex: none;
    height: 2px;
    border-top: 1px solid #2e2e2e;
    background: linear-gradient(90deg, #535353 3%, #c4c4c4 3% 25%, #535353 25%);
  }
</style>
